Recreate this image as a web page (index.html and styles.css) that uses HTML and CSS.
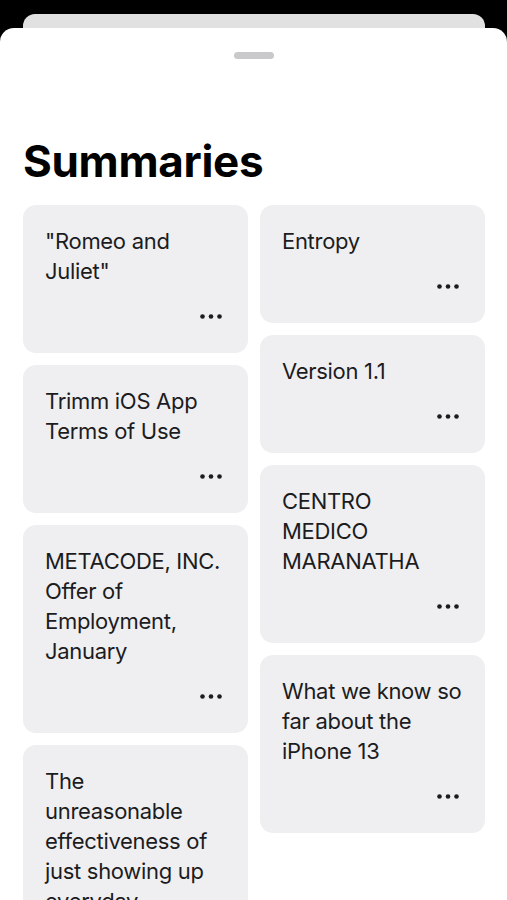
FILE: index.html
```html
<!DOCTYPE html>
<html lang="en">
<head>
<meta charset="utf-8">
<title>Summaries</title>
<link rel="stylesheet" href="styles.css">
</head>
<body>
<div class="backcard"></div>
<main class="sheet">
  <div class="handle"></div>
  <h1 class="title">Summaries</h1>
  <div class="grid">
    <div class="col">
      <div class="card"><p class="card-text">"Romeo and<br>Juliet"</p><div class="more"><svg width="22" height="5" viewBox="0 0 22 5"><circle cx="2.5" cy="2.5" r="2.3"/><circle cx="11" cy="2.5" r="2.3"/><circle cx="19.5" cy="2.5" r="2.3"/></svg></div></div>
      <div class="card"><p class="card-text">Trimm iOS App<br>Terms of Use</p><div class="more"><svg width="22" height="5" viewBox="0 0 22 5"><circle cx="2.5" cy="2.5" r="2.3"/><circle cx="11" cy="2.5" r="2.3"/><circle cx="19.5" cy="2.5" r="2.3"/></svg></div></div>
      <div class="card"><p class="card-text">METACODE, INC.<br>Offer of<br>Employment,<br>January</p><div class="more"><svg width="22" height="5" viewBox="0 0 22 5"><circle cx="2.5" cy="2.5" r="2.3"/><circle cx="11" cy="2.5" r="2.3"/><circle cx="19.5" cy="2.5" r="2.3"/></svg></div></div>
      <div class="card"><p class="card-text">The<br>unreasonable<br>effectiveness of<br>just showing up<br>everyday</p><div class="more"><svg width="22" height="5" viewBox="0 0 22 5"><circle cx="2.5" cy="2.5" r="2.3"/><circle cx="11" cy="2.5" r="2.3"/><circle cx="19.5" cy="2.5" r="2.3"/></svg></div></div>
    </div>
    <div class="col">
      <div class="card"><p class="card-text">Entropy</p><div class="more"><svg width="22" height="5" viewBox="0 0 22 5"><circle cx="2.5" cy="2.5" r="2.3"/><circle cx="11" cy="2.5" r="2.3"/><circle cx="19.5" cy="2.5" r="2.3"/></svg></div></div>
      <div class="card"><p class="card-text">Version 1.1</p><div class="more"><svg width="22" height="5" viewBox="0 0 22 5"><circle cx="2.5" cy="2.5" r="2.3"/><circle cx="11" cy="2.5" r="2.3"/><circle cx="19.5" cy="2.5" r="2.3"/></svg></div></div>
      <div class="card"><p class="card-text">CENTRO<br>MEDICO<br>MARANATHA</p><div class="more"><svg width="22" height="5" viewBox="0 0 22 5"><circle cx="2.5" cy="2.5" r="2.3"/><circle cx="11" cy="2.5" r="2.3"/><circle cx="19.5" cy="2.5" r="2.3"/></svg></div></div>
      <div class="card"><p class="card-text">What we know so<br>far about the<br>iPhone 13</p><div class="more"><svg width="22" height="5" viewBox="0 0 22 5"><circle cx="2.5" cy="2.5" r="2.3"/><circle cx="11" cy="2.5" r="2.3"/><circle cx="19.5" cy="2.5" r="2.3"/></svg></div></div>
    </div>
  </div>
</main>
</body>
</html>
```
FILE: styles.css
```css
html, body {
  margin: 0;
  padding: 0;
  background: #000;
  height: 100%;
  overflow: hidden;
}
body {
  font-family: Inter, "Noto Sans", sans-serif;
  padding-top: 14px;
  box-sizing: border-box;
}
.backcard {
  height: 14px;
  margin: 0 22px 0 23px;
  background: #e1e1e2;
  border-radius: 12px 12px 0 0;
}
.sheet {
  background: #fff;
  border-radius: 14px 14px 0 0;
  min-height: 900px;
  padding: 24px 22px 0 23px;
}
.handle {
  width: 40px;
  height: 7px;
  border-radius: 4px;
  background: #c9c9cb;
  margin: 0 auto;
}
.title {
  margin: 76px 0 18px;
  font-size: 44px;
  line-height: 52px;
  font-weight: 700;
  color: #000;
  letter-spacing: -0.3px;
}
.grid {
  display: flex;
  gap: 12px;
  align-items: flex-start;
}
.col {
  flex: 1 1 0;
  min-width: 0;
  display: flex;
  flex-direction: column;
  gap: 12px;
}
.card {
  background: #efeff1;
  border-radius: 13px;
  padding: 21px 26px 27px 22px;
}
.card-text {
  margin: 0;
  font-size: 22px;
  line-height: 30px;
  color: #1c1c1e;
  white-space: nowrap;
  letter-spacing: -0.3px;
}
.more {
  margin-top: 20px;
  height: 20px;
  display: flex;
  justify-content: flex-end;
  align-items: center;
}
.more svg {
  display: block;
  fill: #1c1c1e;
}
```
